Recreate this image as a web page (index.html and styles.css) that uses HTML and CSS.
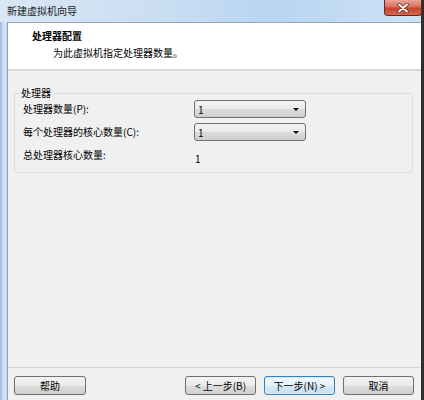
FILE: index.html
```html
<!DOCTYPE html>
<html>
<head>
    <meta charset="UTF-8">
    <title>新建虚拟机向导</title>
    <link rel="stylesheet" href="styles.css">
</head>
<body>
    <div class="window">
        <div class="titlebar">
            <span class="title">新建虚拟机向导</span>
            <a href="javascript:;" class="close">
                <svg width="14" height="10" viewBox="0 0 14 10">
                    <path d="M3 1.5 L11 8.5 M11 1.5 L3 8.5" stroke="#5a1c12" stroke-width="3.4" stroke-linecap="round"/>
                    <path d="M3 1.5 L11 8.5 M11 1.5 L3 8.5" stroke="#fff" stroke-width="2" stroke-linecap="round"/>
                </svg>
            </a>
        </div>
        <div class="client">
            <div class="header">
                <h1>处理器配置</h1>
                <p>为此虚拟机指定处理器数量。</p>
            </div>
            <div class="content">
                <fieldset class="group">
                    <legend>处理器</legend>
                    <div class="rows">
                        <label>处理器数量(P):</label>
                        <div class="combo"><span>1</span><i></i></div>
                        <label>每个处理器的核心数量(C):</label>
                        <div class="combo"><span>1</span><i></i></div>
                        <label>总处理器核心数量:</label>
                        <span class="value">1</span>
                    </div>
                </fieldset>
            </div>
            <div class="footer">
                <button class="btn">帮助</button>
                <div class="nav">
                    <button class="btn">&lt; 上一步(B)</button>
                    <button class="btn btn-default">下一步(N) &gt;</button>
                    <button class="btn">取消</button>
                </div>
            </div>
        </div>
    </div>
</body>
</html>
```

FILE: styles.css
```css
* {
    margin: 0;
    padding: 0;
    box-sizing: border-box;
}
body {
    overflow: hidden;
    width: 424px;
    height: 400px;
    font-family: "Noto Sans CJK SC", "Liberation Sans", sans-serif;
    font-size: 10px;
    color: #000;
}
.window {
    width: 424px;
    height: 400px;
    display: flex;
    flex-direction: column;
    background: #cddff3;
    border-left: 2px solid #a7c3e6;
    border-right: 3px solid #2e2e2e;
}

/* title bar */
.titlebar {
    height: 22px;
    display: flex;
    align-items: flex-start;
    background: linear-gradient(90deg, #d9e6f4 0%, #c9ddf2 40%, #b8d5f2 65%, #cfe2f5 100%);
    margin-left: -2px;
    padding-left: 7px;
}
.title {
    line-height: 21px;
    color: #1a1a1a;
}
.close {
    margin-left: auto;
    margin-right: -1px;
    width: 38px;
    height: 16px;
    display: flex;
    align-items: center;
    justify-content: center;
    border: 1px solid #6b2418;
    border-top: none;
    border-radius: 0 0 4px 4px;
    background: linear-gradient(#eba597 0%, #d8725f 45%, #c4432c 55%, #d66a52 100%);
}

/* client area */
.client {
    flex: 1;
    margin-left: 5px;
    display: flex;
    flex-direction: column;
    background: #f0f0f0;
    border-left: 1px solid #8a9cb3;
    border-top: 1px solid #9aa4ae;
}
.header {
    height: 48px;
    background: #fff;
    border-bottom: 2px solid #d8d8d8;
    padding: 6px 0 0 24px;
}
.header h1 {
    font-size: 10px;
    font-weight: bold;
    line-height: 13px;
}
.header p {
    line-height: 13px;
    margin: 4px 0 0 21px;
}

.content {
    flex: 1;
    padding: 16px 8px 0 6px;
}
.group {
    border: 1px solid #d5dfe5;
    border-radius: 3px;
    padding: 1px 8px 6px 8px;
    height: 86px;
}
.group legend {
    margin-left: -4px;
    padding: 0 2px;
    line-height: 12px;
}
.rows {
    display: grid;
    grid-template-columns: 171px 112px;
    grid-auto-rows: 18px;
    row-gap: 5px;
    align-items: center;
}
.rows label {
    line-height: 14px;
}
.combo {
    height: 18px;
    border: 1px solid #707070;
    border-radius: 3px;
    background: linear-gradient(#f3f3f3 0%, #ebebeb 50%, #dddddd 51%, #cfcfcf 100%);
    display: flex;
    align-items: center;
    padding: 0 6px 0 3px;
}
.combo span {
    flex: 1;
}
.combo i {
    width: 0;
    height: 0;
    border-left: 3px solid transparent;
    border-right: 3px solid transparent;
    border-top: 3px solid #000;
}
.value {
    padding-left: 1px;
    margin-top: 7px;
}

/* buttons */
.footer {
    height: 33px;
    border-top: 1px solid #d5d5d5;
    display: flex;
    align-items: flex-start;
    padding: 8px 7px 0 6px;
}
.nav {
    margin-left: auto;
    display: flex;
    gap: 8px;
}
.btn {
    width: 72px;
    height: 19px;
    font-family: inherit;
    font-size: 10px;
    color: #000;
    border: 1px solid #707070;
    border-radius: 3px;
    background: linear-gradient(#f2f2f2 0%, #ebebeb 50%, #dddddd 51%, #cfcfcf 100%);
}
.nav .btn {
    width: 71px;
}
.btn-default {
    border-color: #3c7fb1;
    box-shadow: inset 0 0 0 1px #d4eefb;
    background: linear-gradient(#f1f8fd 0%, #e6f2fa 50%, #d7e9f5 51%, #c8e0f0 100%);
}
```
